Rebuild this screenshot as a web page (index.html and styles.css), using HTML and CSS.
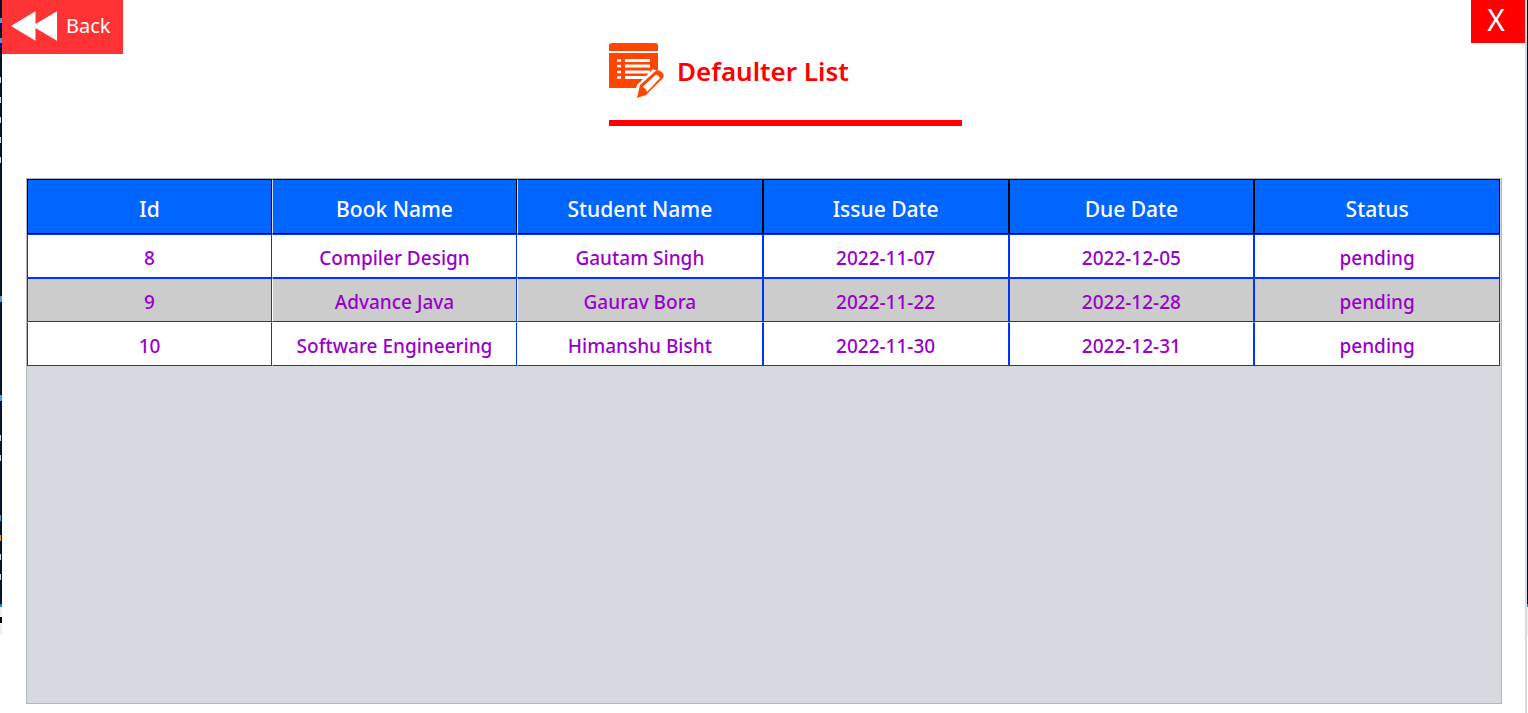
FILE: index.html
```html
<!DOCTYPE html>
<html lang="en">
<head>
<meta charset="utf-8">
<title>Defaulter List</title>
<link rel="stylesheet" href="styles.css">
</head>
<body>
<div class="desktop">
  <div class="edge edge-left"></div>
  <main class="window">
    <header class="topbar">
      <button class="back" type="button">
        <svg class="back-icon" viewBox="0 0 48 30" aria-hidden="true"><path d="M0 15 25 0v13L47 0v30L25 17v13z" fill="#fff"/></svg>
        <span>Back</span>
      </button>
      <div class="heading">
        <svg class="title-icon" viewBox="0 0 56 56" aria-hidden="true">
          <path d="M0 8V3a3 3 0 0 1 3-3h43a3 3 0 0 1 3 3v5zM0 10h49v17L32 45H0z" fill="#ff4500"/>
          <path d="M8 17.500h4M8 23h4M8 29h4M8 34.500h4" stroke="#fff" stroke-width="2.500"/>
          <path d="M16 17.500h25M16 23h25M16 29h25M16 34.500h21" stroke="#fff" stroke-width="2.800"/>
          <path d="M44 26 28 42l-4 12 31-23z" fill="#fff"/>
          <path d="M31 42 46 28.500q3-2.500 6.500.5t1.500 6L37 52l-9 3z" fill="#ff4500"/>
          <path d="M33.500 44 47 31.500q3 .5 4 3.500L38 49q-1-4-4.500-5z" fill="#fff"/>
        </svg>
        <h1>Defaulter List</h1>
      </div>
      <button class="close" type="button" aria-label="Close">X</button>
    </header>
    <section class="panel">
      <table class="grid">
        <thead>
          <tr><th>Id</th><th>Book Name</th><th>Student Name</th><th>Issue Date</th><th>Due Date</th><th>Status</th></tr>
        </thead>
        <tbody>
          <tr><td>8</td><td>Compiler Design</td><td>Gautam Singh</td><td>2022-11-07</td><td>2022-12-05</td><td>pending</td></tr>
          <tr><td>9</td><td>Advance Java</td><td>Gaurav Bora</td><td>2022-11-22</td><td>2022-12-28</td><td>pending</td></tr>
          <tr><td>10</td><td>Software Engineering</td><td>Himanshu Bisht</td><td>2022-11-30</td><td>2022-12-31</td><td>pending</td></tr>
        </tbody>
      </table>
    </section>
  </main>
  <div class="edge edge-right"></div>
</div>
</body>
</html>
```
FILE: styles.css
```css
* { box-sizing: border-box; }
body {
  margin: 0;
  background: #fff;
  font-family: "Noto Sans", "Open Sans", sans-serif;
}
button { border: 0; padding: 0; color: #fff; font-family: inherit; }
.desktop { display: flex; min-height: 100vh; }

/* slivers of the editor and taskbar behind the window */
.edge {
  background: linear-gradient(#021427 0 604px, #2e7cc8 604px 607px, #f0f0f0 607px 635px, #fff 635px);
}
.edge-left {
  width: 2px;
  background:
    linear-gradient(#4a9ae0, #4a9ae0) 0 18px / 2px 5px no-repeat,
    linear-gradient(#00f, #00f) 0 26px / 2px 1px no-repeat,
    linear-gradient(#4a9ae0, #4a9ae0) 0 38px / 2px 5px no-repeat,
    linear-gradient(#00f, #00f) 0 46px / 2px 1px no-repeat,
    linear-gradient(#d4d4d4, #d4d4d4) 0 77px / 1px 6px no-repeat,
    linear-gradient(#d4d4d4, #d4d4d4) 0 97px / 1px 6px no-repeat,
    linear-gradient(#d4d4d4, #d4d4d4) 0 117px / 1px 6px no-repeat,
    linear-gradient(#d4d4d4, #d4d4d4) 0 137px / 1px 6px no-repeat,
    linear-gradient(#d4d4d4, #d4d4d4) 0 157px / 1px 6px no-repeat,
    linear-gradient(#4a9ae0, #4a9ae0) 0 296px / 2px 6px no-repeat,
    linear-gradient(#4a9ae0, #4a9ae0) 0 395px / 2px 6px no-repeat,
    linear-gradient(#d4d4d4, #d4d4d4) 0 435px / 1px 6px no-repeat,
    linear-gradient(#d4d4d4, #d4d4d4) 0 455px / 1px 6px no-repeat,
    linear-gradient(#4a9ae0, #4a9ae0) 0 515px / 1px 6px no-repeat,
    linear-gradient(#e0a030, #e0a030) 0 535px / 1px 6px no-repeat,
    linear-gradient(#d4d4d4, #d4d4d4) 0 554px / 1px 6px no-repeat,
    linear-gradient(#d4d4d4, #d4d4d4) 0 574px / 1px 6px no-repeat,
    linear-gradient(#000, #000) 0 617px / 2px 6px no-repeat,
    linear-gradient(#021427 0 604px, #2e7cc8 604px 607px, #f0f0f0 607px 635px, #fff 635px);
}
.edge-right { width: 1px; }
.window {
  flex: 1;
  display: flex;
  flex-direction: column;
  border-right: 2px solid #d6d9df;
}
.topbar {
  display: grid;
  grid-template-columns: 1fr 353px 1fr;
  align-items: start;
  margin-bottom: 52px;
}
.back {
  display: flex;
  align-items: center;
  gap: 8px;
  width: 121px;
  height: 54px;
  padding: 0 0 3px 9px;
  background: #f33;
  font-size: 20px;
}
.back-icon { width: 47px; height: 30px; }
.heading {
  display: flex;
  gap: 12px;
  width: 353px;
  height: 83px;
  margin: 43px 0 0 22px;
  border-bottom: 6px solid #f00;
}
.title-icon { width: 56px; height: 56px; }
h1 {
  margin: 8px 0 0;
  color: #f00;
  font-size: 26px;
  line-height: 40px;
  font-weight: 600;
}
.close {
  justify-self: end;
  width: 54px;
  height: 43px;
  padding: 0 4px 4px 0;
  background: #f00;
  font-size: 30px;
  line-height: 38px;
}
.panel {
  flex: 1;
  margin: 0 23px 9px 24px;
  padding-right: 1px;
  border: 1px solid #b4b7bd;
  background: #d6d9df;
}
.grid {
  width: 100%;
  table-layout: fixed;
  border-collapse: separate;
  border-spacing: 0;
  text-align: center;
}
th {
  height: 55px;
  padding: 4px 0 0;
  border: 1px solid #000;
  background: #06f;
  color: #fff;
  font-size: 21px;
  line-height: 28px;
  font-weight: 500;
}
th:nth-child(-n+2) { width: 245px; }
td {
  height: 44px;
  padding: 4px 0 0;
  border: 1px solid #03f;
  background: #fff;
  color: #90c;
  font-size: 19px;
  line-height: 28px;
  font-weight: 500;
}
tbody tr:nth-child(even) td { background: #ccc; }
tbody tr:last-child td { border-top-color: #fff; }
th:nth-child(2), th:nth-child(3) { border-left-color: #d6d9df; }
td:nth-child(2), td:nth-child(3) { border-left-color: #fff; }
```
